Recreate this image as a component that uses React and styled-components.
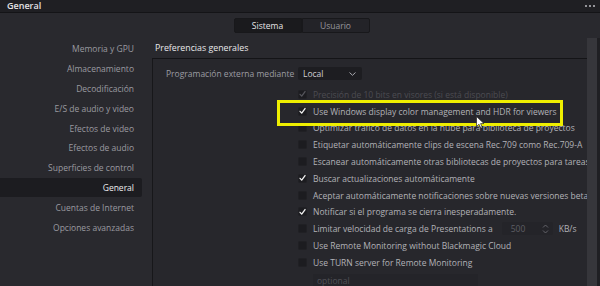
import React from 'react';
import styled, { createGlobalStyle } from 'styled-components';

const GlobalStyle = createGlobalStyle`
  html, body {
    margin: 0;
    padding: 0;
    background: #29292e;
  }
  body {
    font-family: "Open Sans", "Noto Sans", sans-serif;
  }
`;

const sections = [
  "Memoria y GPU",
  "Almacenamiento",
  "Decodificación",
  "E/S de audio y video",
  "Efectos de video",
  "Efectos de audio",
  "Superficies de control",
  "General",
  "Cuentas de Internet",
  "Opciones avanzadas",
];

const options = [
  { label: "Precisión de 10 bits en visores (si está disponible)", checked: true, disabled: true },
  { label: "Use Windows display color management and HDR for viewers", checked: true },
  { label: "Optimizar tráfico de datos en la nube para biblioteca de proyectos" },
  { label: "Etiquetar automáticamente clips de escena Rec.709 como Rec.709-A" },
  { label: "Escanear automáticamente otras bibliotecas de proyectos para tareas de" },
  { label: "Buscar actualizaciones automáticamente", checked: true },
  { label: "Aceptar automáticamente notificaciones sobre nuevas versiones beta del" },
  { label: "Notificar si el programa se cierra inesperadamente.", checked: true },
  { label: "Limitar velocidad de carga de Presentations a", rate: true },
  { label: "Use Remote Monitoring without Blackmagic Cloud" },
  { label: "Use TURN server for Remote Monitoring" },
];

const Check = () => (
  <svg width="8" height="8" viewBox="0 0 8 8">
    <path d="M1.2 4.4 L3.1 6.4 L6.9 1.2" fill="none" stroke="#f2f2f2" strokeWidth="1.5" strokeLinecap="round" strokeLinejoin="round" />
  </svg>
);

const App = () => {
  return (
    <Window>
      <GlobalStyle />
      <TitleBar>
        <Title>General</Title>
        <Dots>
          <Dot /><Dot /><Dot />
        </Dots>
      </TitleBar>

      <TabsRow>
        <Tab active>Sistema</Tab>
        <Tab>Usuario</Tab>
      </TabsRow>

      <Body>
        <Sidebar>
          {sections.map((s) => (
            <SideItem key={s} selected={s === "General"}>{s}</SideItem>
          ))}
        </Sidebar>

        <Content>
          <Header>Preferencias generales</Header>
          <Panel>
            <FieldRow>
              <FieldLabel>Programación externa mediante</FieldLabel>
              <Select>
                Local
                <svg width="7" height="4" viewBox="0 0 7 4">
                  <path d="M0.5 0.5 L3.5 3.3 L6.5 0.5" fill="none" stroke="#a8a8ae" strokeWidth="1" />
                </svg>
              </Select>
            </FieldRow>

            <CheckList>
              {options.map((o) => (
                <CheckRow key={o.label} disabled={o.disabled}>
                  <Box>{o.checked && <Check />}</Box>
                  <span>{o.label}</span>
                  {o.rate && (
                    <>
                      <Spin>
                        500
                        <svg width="7" height="10" viewBox="0 0 7 10">
                          <path d="M1 3.5 L3.5 1 L6 3.5 M1 6.5 L3.5 9 L6 6.5" fill="none" stroke="#6a6a70" strokeWidth="0.9" />
                        </svg>
                      </Spin>
                      <Unit>KB/s</Unit>
                    </>
                  )}
                </CheckRow>
              ))}
              <TextInput>optional</TextInput>
            </CheckList>
          </Panel>
        </Content>

        <Scrollbar />
        <Edge />
      </Body>

      <Highlight />
      <Cursor>
        <svg width="9" height="13" viewBox="0 0 9 13">
          <path d="M0.5 0.5 L0.5 10.5 L3 8.2 L4.8 12.2 L6.3 11.5 L4.6 7.6 L8 7.6 Z" fill="#ffffff" stroke="#222" strokeWidth="0.7" />
        </svg>
      </Cursor>
    </Window>
  );
};

export default App;

const Window = styled.div`
  position: relative;
  width: 600px;
  height: 286px;
  overflow: hidden;
  display: flex;
  flex-direction: column;
  background: #29292e;
`;

const TitleBar = styled.div`
  height: 12px;
  flex: 0 0 12px;
  display: flex;
  align-items: center;
  justify-content: space-between;
  padding: 0 5px 0 7px;
  background: #1f1f23;
  border-bottom: 1px solid #141417;
`;

const Title = styled.div`
  font-size: 9px;
  font-weight: 600;
  color: #e2e2e4;
  line-height: 12px;
`;

const Dots = styled.div`
  display: flex;
  gap: 2px;
  align-items: center;
`;

const Dot = styled.span`
  width: 2px;
  height: 2px;
  border-radius: 50%;
  background: #bdbdc2;
`;

const TabsRow = styled.div`
  flex: 0 0 25px;
  display: flex;
  justify-content: center;
  align-items: flex-start;
  padding-top: 5px;
  box-sizing: border-box;
  padding-left: 3px;
`;

const Tab = styled.div`
  width: 68px;
  height: 15px;
  box-sizing: border-box;
  display: flex;
  align-items: center;
  justify-content: center;
  font-size: 8.5px;
  color: ${({ active }) => (active ? "#e4e4e6" : "#96969c")};
  background: ${({ active }) => (active ? "#1a1a1d" : "#232328")};
  border: 1px solid #18181b;
  border-radius: ${({ active }) => (active ? "2px 0 0 2px" : "0 2px 2px 0")};
`;

const Body = styled.div`
  flex: 1;
  display: flex;
  min-height: 0;
`;

const Sidebar = styled.div`
  width: 152px;
  flex: 0 0 152px;
  padding-top: 1px;
  display: flex;
  flex-direction: column;
`;

const SideItem = styled.div`
  width: 142px;
  height: 19.8px;
  box-sizing: border-box;
  padding-right: 8px;
  display: flex;
  align-items: center;
  justify-content: flex-end;
  font-size: 8.5px;
  color: ${({ selected }) => (selected ? "#ececee" : "#9a9aa0")};
  background: ${({ selected }) => (selected ? "#1c1c20" : "transparent")};
  border-radius: 0 2px 2px 0;
`;

const Content = styled.div`
  flex: 1;
  display: flex;
  flex-direction: column;
  min-width: 0;
`;

const Header = styled.div`
  height: 20px;
  flex: 0 0 20px;
  padding-left: 3px;
  display: flex;
  align-items: center;
  font-size: 8.8px;
  font-weight: 400;
  color: #e8e8ea;
  border-bottom: 1px solid #141417;
`;

const Panel = styled.div`
  flex: 1;
  overflow: hidden;
  border-left: 1px solid #17171a;
  background: #27272c;
  padding: 8px 0 0 13px;
  display: flex;
  flex-direction: column;
`;

const FieldRow = styled.div`
  display: flex;
  align-items: center;
  height: 14px;
`;

const FieldLabel = styled.div`
  width: 132px;
  font-size: 8.5px;
  color: #9c9ca2;
  white-space: nowrap;
`;

const Select = styled.div`
  width: 64px;
  height: 13px;
  box-sizing: border-box;
  padding: 0 6px 0 5px;
  display: flex;
  align-items: center;
  justify-content: space-between;
  background: #1d1d21;
  border-radius: 2px;
  font-size: 8.5px;
  color: #cfcfd3;
`;

const CheckList = styled.div`
  margin-left: 132px;
  margin-top: 6px;
  display: flex;
  flex-direction: column;
`;

const CheckRow = styled.div`
  height: 16.8px;
  display: flex;
  align-items: center;
  gap: 6px;
  white-space: nowrap;
  font-size: 8.5px;
  color: ${({ disabled }) => (disabled ? "#4c4c52" : "#b2b2b7")};
  svg path {
    stroke: ${({ disabled }) => (disabled ? "#55555b" : "")};
  }
`;

const Box = styled.div`
  width: 9px;
  height: 9px;
  flex: 0 0 9px;
  box-sizing: border-box;
  display: flex;
  align-items: center;
  justify-content: center;
  background: #1c1c20;
  border: 1px solid #202024;
  border-radius: 1.5px;
`;

const Spin = styled.div`
  margin-left: 3px;
  width: 51px;
  height: 13px;
  box-sizing: border-box;
  padding: 0 4px 0 9px;
  display: flex;
  align-items: center;
  justify-content: space-between;
  background: #242429;
  border-radius: 2px;
  color: #5e5e64;
`;

const Unit = styled.span`
  color: #b2b2b7;
`;

const TextInput = styled.div`
  margin: 3px 0 0 15px;
  width: 165px;
  height: 13px;
  box-sizing: border-box;
  padding-left: 4px;
  display: flex;
  align-items: center;
  background: #242429;
  font-size: 8.5px;
  color: #505056;
`;

const Scrollbar = styled.div`
  width: 10px;
  flex: 0 0 10px;
  background: #36363b;
`;

const Edge = styled.div`
  width: 3px;
  flex: 0 0 3px;
  background: #1f1f23;
`;

const Highlight = styled.div`
  position: absolute;
  left: 277px;
  top: 100px;
  width: 286px;
  height: 26px;
  box-sizing: border-box;
  border: 3.5px solid #eeee00;
  pointer-events: none;
`;

const Cursor = styled.div`
  position: absolute;
  left: 476px;
  top: 116px;
  width: 9px;
  height: 13px;
  line-height: 0;
`;
